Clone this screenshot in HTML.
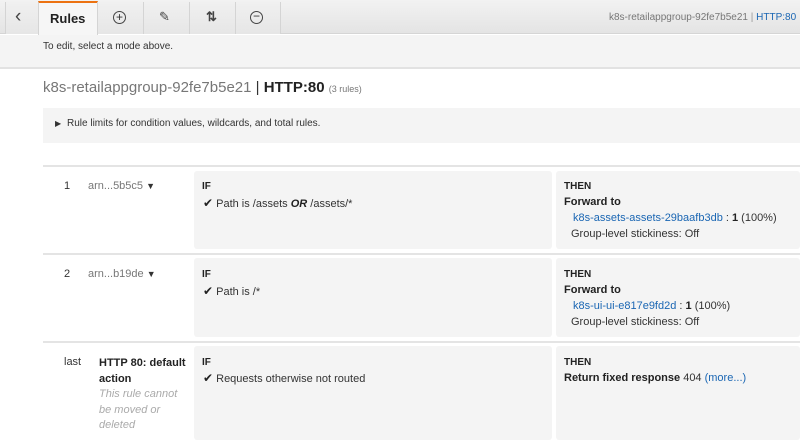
<!DOCTYPE html>
<html><head><meta charset="utf-8"><style>
*{margin:0;padding:0;box-sizing:border-box}
body{width:800px;height:448px;overflow:hidden;background:#fff;font-family:"Liberation Sans",Arial,sans-serif;font-size:11px;color:#333;position:relative}
.a{position:absolute;white-space:nowrap}
.tb{position:absolute;left:0;top:0;width:800px;height:34px;background:linear-gradient(#f2f2f2,#e4e4e4);border-bottom:1px solid #d5d5d5}
.tab{position:absolute;top:2px;height:32px;border-left:1px solid #d4d4d4;border-right:1px solid #d4d4d4;background:linear-gradient(#f0f0f0,#e6e6e6)}
.box{position:absolute;background:#f4f4f4;border-radius:3px}
.hr{position:absolute;left:43px;width:757px;height:2px;background:#e4e4e4}
b{color:#222}
.lk{color:#1a66b3}
.ck{font-size:12px;color:#222}
</style></head><body>
<div class="tb"></div>
<div class="tab" style="left:5px;width:34px"></div>
<div class="a" style="left:15px;top:6px;font-size:19px;color:#444">&#8249;</div>
<div class="tab" style="left:38px;width:60px;top:1px;height:34px;background:#f6f6f6;border-top:2px solid #ec7211"></div>
<div class="a" style="left:50px;top:11px;font-size:13px;font-weight:bold;color:#222">Rules</div>
<div class="tab" style="left:97px;width:47px"></div>
<div class="a" style="left:113px;top:11px;width:13px;height:13px;border:1.3px solid #444;border-radius:50%;text-align:center;line-height:10px;font-size:12px">+</div>
<div class="tab" style="left:143px;width:47px"></div>
<div class="a" style="left:159px;top:9px;font-size:13px;color:#444">&#9998;</div>
<div class="tab" style="left:189px;width:47px"></div>
<div class="a" style="left:206px;top:9px;font-size:13px;font-weight:bold;color:#444">&#8645;</div>
<div class="tab" style="left:235px;width:46px"></div>
<div class="a" style="left:250px;top:11px;width:13px;height:13px;border:1.3px solid #444;border-radius:50%;text-align:center;line-height:9px;font-size:12px">&minus;</div>
<div class="a" style="left:609px;top:12px;font-size:10px;color:#777">k8s-retailappgroup-92fe7b5e21 <span style="color:#999">|</span> <span class="lk">HTTP:80</span></div>
<div class="a" style="left:0;top:35px;width:800px;height:34px;background:#f4f4f4;border-bottom:2px solid #e2e2e2"></div>
<div class="a" style="left:43px;top:41px;font-size:10px;color:#333">To edit, select a mode above.</div>
<div class="a" style="left:43px;top:79px;font-size:15px;color:#777">k8s-retailappgroup-92fe7b5e21 <span style="color:#333">|</span> <b style="color:#222">HTTP:80</b> <span style="font-size:9px">(3 rules)</span></div>
<div class="box" style="left:43px;top:108px;width:757px;height:35px;border-radius:0"></div>
<div class="a" style="left:55px;top:119px;font-size:8px">&#9654;</div>
<div class="a" style="left:67px;top:118px;font-size:10px">Rule limits for condition values, wildcards, and total rules.</div>
<div class="hr" style="top:165px"></div>
<div class="hr" style="top:253px"></div>
<div class="hr" style="top:341px"></div>

<div class="box" style="left:194px;top:171px;width:358px;height:78px"></div>
<div class="box" style="left:556px;top:171px;width:244px;height:78px"></div>
<div class="box" style="left:194px;top:258px;width:358px;height:79px"></div>
<div class="box" style="left:556px;top:258px;width:244px;height:79px"></div>
<div class="box" style="left:194px;top:346px;width:358px;height:94px"></div>
<div class="box" style="left:556px;top:346px;width:244px;height:94px"></div>

<div class="a" style="left:64px;top:180px">1</div>
<div class="a" style="left:88px;top:180px;color:#777">arn...5b5c5 <span style="color:#333;font-size:9px">&#9660;</span></div>
<div class="a" style="left:202px;top:181px;font-size:10px"><b>IF</b></div>
<div class="a" style="left:203px;top:196px"><span class="ck">&#10004;</span> Path is /assets <b><i>OR</i></b> /assets/*</div>
<div class="a" style="left:564px;top:181px;font-size:10px"><b>THEN</b></div>
<div class="a" style="left:564px;top:196px"><b>Forward to</b></div>
<div class="a" style="left:573px;top:212px"><span class="lk">k8s-assets-assets-29baafb3db</span> : <b>1</b> (100%)</div>
<div class="a" style="left:571px;top:228px">Group-level stickiness: Off</div>

<div class="a" style="left:64px;top:268px">2</div>
<div class="a" style="left:88px;top:268px;color:#777">arn...b19de <span style="color:#333;font-size:9px">&#9660;</span></div>
<div class="a" style="left:202px;top:269px;font-size:10px"><b>IF</b></div>
<div class="a" style="left:203px;top:284px"><span class="ck">&#10004;</span> Path is /*</div>
<div class="a" style="left:564px;top:269px;font-size:10px"><b>THEN</b></div>
<div class="a" style="left:564px;top:284px"><b>Forward to</b></div>
<div class="a" style="left:573px;top:300px"><span class="lk">k8s-ui-ui-e817e9fd2d</span> : <b>1</b> (100%)</div>
<div class="a" style="left:571px;top:316px">Group-level stickiness: Off</div>

<div class="a" style="left:64px;top:356px">last</div>
<div class="a" style="left:99px;top:356px;line-height:15.5px;white-space:normal;width:92px"><b>HTTP 80: default action</b><br><i style="color:#aaa">This rule cannot be moved or deleted</i></div>
<div class="a" style="left:202px;top:357px;font-size:10px"><b>IF</b></div>
<div class="a" style="left:203px;top:371px"><span class="ck">&#10004;</span> Requests otherwise not routed</div>
<div class="a" style="left:564px;top:357px;font-size:10px"><b>THEN</b></div>
<div class="a" style="left:564px;top:372px"><b>Return fixed response</b> 404 <span class="lk">(more...)</span></div>
</body></html>
